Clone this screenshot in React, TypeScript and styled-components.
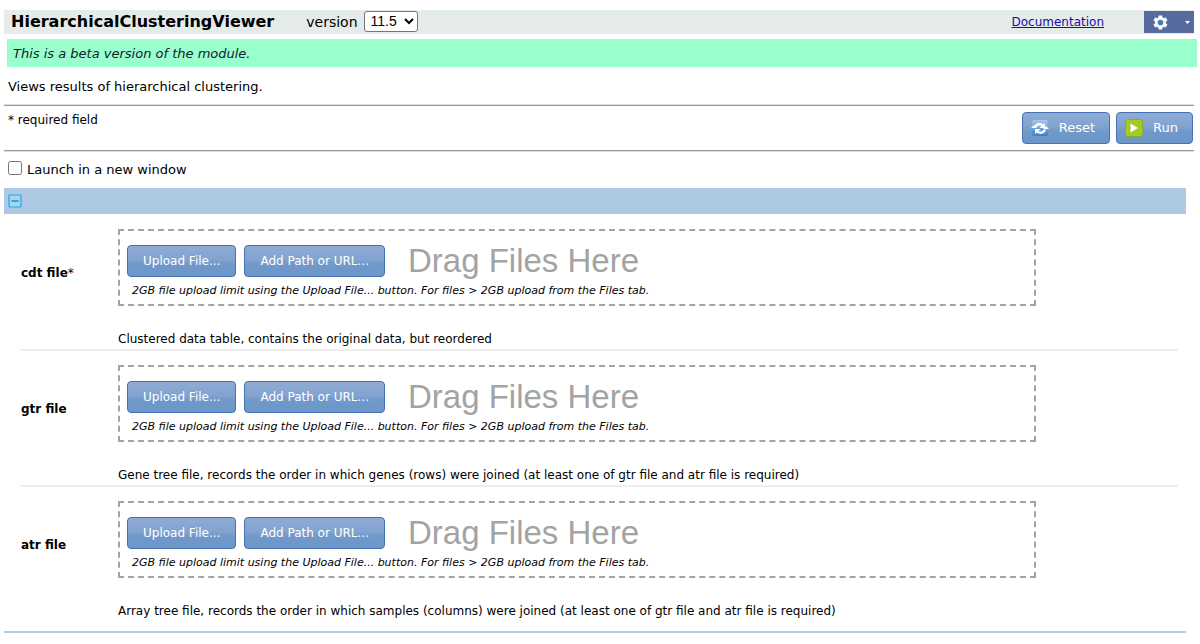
import React, { useState } from "react";
import styled, { createGlobalStyle } from "styled-components";

const GlobalStyle = createGlobalStyle`
  * { box-sizing: border-box; }
  body {
    margin: 0;
    background: #fff;
    color: #000;
    font-family: Verdana, "DejaVu Sans", sans-serif;
    font-size: 12px;
    line-height: 16px;
  }
`;

const Page = styled.form`
  padding: 10px 6px 12px 4px;
`;

const Header = styled.header`
  display: flex;
  align-items: center;
  height: 24px;
  padding-left: 7px;
  background: #e4ebe8;
`;

const Title = styled.h1`
  margin: 0 32px 0 0;
  font-size: 16px;
  line-height: 24px;
`;

const VersionLabel = styled.label`
  display: flex;
  align-items: center;
  gap: 6px;
  flex: 1;
  font-size: 14px;
  line-height: 24px;
`;

const VersionSelect = styled.select`
  width: 54px;
  height: 21px;
  margin-bottom: 2px;
  padding: 0 0 0 2px;
  border: 1px solid #767676;
  border-radius: 3px;
  background: #fff;
  color: #000;
  font: 14px Arial, "Liberation Sans", sans-serif;
`;

const DocLink = styled.a`
  margin-right: 40px;
  color: #1a0dab;
`;

const SettingsButton = styled.button`
  display: flex;
  align-items: center;
  justify-content: space-between;
  width: 50px;
  height: 22px;
  padding: 0 4px 0 8px;
  border: 0;
  background: #586b9e;
`;

const Banner = styled.p`
  margin: 5px -3px 0 3px;
  padding: 7px 6px 5px;
  background: #99ffcc;
  color: #123;
  font-size: 13px;
  font-style: italic;
`;

const Summary = styled.p`
  margin: 0;
  padding: 12px 4px 10px;
  font-size: 13px;
`;

const ActionBar = styled.div`
  display: flex;
  justify-content: space-between;
  align-items: flex-start;
  padding: 6px 1px 6px 4px;
  border: solid #999;
  border-width: 1px 0;
  box-shadow: 0 -1px #ddd, 0 1px #ddd;
`;

const Actions = styled.div`
  display: flex;
  gap: 6px;
`;

const BlueButton = styled.button`
  display: flex;
  align-items: center;
  gap: 10px;
  height: 32px;
  padding: 0 15px;
  border: 1px solid #4572b5;
  border-radius: 4px;
  background: linear-gradient(#8eabd3 0%, #82a3d0 45%, #7099ca 60%, #6d96c9 100%);
  color: #fff;
  font-family: Verdana, "DejaVu Sans", sans-serif;
  font-size: 12px;
  line-height: 16px;
  white-space: nowrap;
`;

const ActionButton = styled(BlueButton)`
  padding: 0 14px 0 8px;
  font-size: 13px;
`;

const LaunchOption = styled.label`
  display: flex;
  align-items: center;
  gap: 5px;
  padding: 9px 4px 8px;
  font-size: 13px;
  line-height: 20px;

  input {
    width: 14px;
    height: 14px;
    margin: 0 0 4px;
  }
`;

const Group = styled.section`
  margin-right: 8px;
  border-bottom: 2px solid #b3cce3;
`;

const GroupBar = styled.div`
  display: flex;
  align-items: center;
  height: 26px;
  padding-left: 4px;
  background: #aec9e4;
`;

const CollapseButton = styled.button`
  display: flex;
  padding: 0;
  border: 0;
  background: none;
`;

const Rows = styled.div`
  padding: 1px 8px 0 16px;
`;

const Row = styled.div`
  display: grid;
  grid-template-columns: 98px 1fr;
  padding: 14px 0 2px;
  border-bottom: 2px solid #eee;

  &:last-child {
    padding-bottom: 12px;
    border-bottom: 0;
  }
`;

const RowLabel = styled.div`
  padding: 36px 0 0 1px;
  font-weight: bold;

  span { font-weight: normal; }
`;

const DropZone = styled.div`
  height: 77px;
  margin-right: 142px;
  padding: 14px 7px 0;
  border: 2px dashed #a3a3a3;
`;

const DropControls = styled.div`
  display: flex;
  align-items: center;
  gap: 8px;
  height: 32px;
`;

const DropText = styled.span`
  margin-left: 15px;
  color: #a3a3a3;
  font: 33px/32px Arial, "Liberation Sans", sans-serif;
`;

const LimitNote = styled.p`
  margin: 6px 0 0 5px;
  font-size: 11px;
  font-style: italic;
`;

const Description = styled.p`
  margin: 25px 0 0;
`;

const GearIcon = () => (
  <svg width="17" height="17" viewBox="0 0 24 24" fill="#fff" aria-hidden="true">
    <path d="M19.4 13c.1-.3.1-.7.1-1s0-.7-.1-1l2.100-1.600c.2-.2.3-.5.1-.7l-2-3.500c-.1-.2-.4-.3-.6-.2l-2.500 1c-.5-.4-1.100-.7-1.700-1l-.4-2.600c0-.3-.3-.4-.5-.4h-4c-.2 0-.4.2-.5.4L9 5c-.6.300-1.200.6-1.700 1l-2.500-1c-.2-.1-.5 0-.6.200l-2 3.500c-.1.200-.1.500.1.700L4.500 11c0 .3-.1.700-.1 1s0 .7.100 1l-2.200 1.600c-.2.200-.2.500-.1.700l2 3.500c.1.200.4.300.6.200l2.500-1c.5.4 1.100.7 1.700 1l.4 2.600c0 .2.200.4.500.4h4c.2 0 .5-.2.5-.4l.4-2.600c.6-.3 1.200-.6 1.700-1l2.500 1c.2.100.5 0 .6-.2l2-3.500c.1-.2.1-.5-.1-.7z" />
    <circle cx="12" cy="12" r="4" fill="#3f7fba" />
  </svg>
);

const CaretIcon = () => (
  <svg width="5" height="3" viewBox="0 0 5 3" aria-hidden="true">
    <path d="M0 0h5L2.500 3z" fill="#fff" />
  </svg>
);

const ResetIcon = () => (
  <svg width="18" height="18" viewBox="0 0 18 18" aria-hidden="true">
    <defs>
      <linearGradient id="resetFill" x1="0" y1="0" x2="0" y2="1">
        <stop offset="0" stopColor="#a6c8ee" />
        <stop offset="1" stopColor="#3b7fc4" />
      </linearGradient>
    </defs>
    <rect x="1" y="1" width="16" height="16" rx="2" fill="url(#resetFill)" />
    <path d="M3 8.500C3.500 4.500 8.500 2.500 12 5.500L14 4v5H8.500l2-2C8.500 5.800 6 6.500 5.500 8.500z" fill="#fff" />
    <path d="M3 8.500C3.500 4.500 8.500 2.500 12 5.500L14 4v5H8.500l2-2C8.500 5.800 6 6.500 5.500 8.500z" fill="#fff" transform="rotate(180 9 9.500)" />
    <path d="M0 9l3-3 3 3zM12 10h6l-3-3z" fill="#fff" />
  </svg>
);

const RunIcon = () => (
  <svg width="18" height="18" viewBox="0 0 18 18" aria-hidden="true">
    <rect x="0.500" y="0.500" width="17" height="17" rx="2" fill="#a5c926" stroke="#86ac2c" />
    <path d="M5.500 4.500l7.500 4.500-7.500 4.500z" fill="#fff" />
  </svg>
);

const ToggleIcon = ({ open }: { open: boolean }) => (
  <svg width="14" height="14" viewBox="0 0 14 14" aria-hidden="true">
    <rect x="1" y="1" width="12" height="12" rx="1" fill="#a9d3ee" stroke="#20a9e2" strokeWidth="1.200" />
    <path d={open ? "M3.500 7h7" : "M3.500 7h7M7 3.500v7"} stroke="#1ba0d8" strokeWidth="1.700" />
  </svg>
);

const files = [
  { name: "cdt file", required: true, text: "Clustered data table, contains the original data, but reordered" },
  { name: "gtr file", required: false, text: "Gene tree file, records the order in which genes (rows) were joined (at least one of gtr file and atr file is required)" },
  { name: "atr file", required: false, text: "Array tree file, records the order in which samples (columns) were joined (at least one of gtr file and atr file is required)" },
];

export default function App() {
  const [open, setOpen] = useState(true);

  return (
    <>
      <GlobalStyle />
      <Page onSubmit={(e: React.FormEvent) => e.preventDefault()}>
        <Header>
          <Title>HierarchicalClusteringViewer</Title>
          <VersionLabel>
            version
            <VersionSelect defaultValue="11.5">
              <option>11.5</option>
            </VersionSelect>
          </VersionLabel>
          <DocLink href="#documentation">Documentation</DocLink>
          <SettingsButton type="button" aria-label="Settings">
            <GearIcon />
            <CaretIcon />
          </SettingsButton>
        </Header>
        <Banner>This is a beta version of the module.</Banner>
        <Summary>Views results of hierarchical clustering.</Summary>
        <ActionBar>
          <span>* required field</span>
          <Actions>
            <ActionButton type="reset"><ResetIcon />Reset</ActionButton>
            <ActionButton type="submit"><RunIcon />Run</ActionButton>
          </Actions>
        </ActionBar>
        <LaunchOption>
          <input type="checkbox" />
          Launch in a new window
        </LaunchOption>
        <Group>
          <GroupBar>
            <CollapseButton type="button" aria-label="Toggle parameters" aria-expanded={open} onClick={() => setOpen(!open)}>
              <ToggleIcon open={open} />
            </CollapseButton>
          </GroupBar>
          {open && (
            <Rows>
              {files.map((file) => (
                <Row key={file.name}>
                  <RowLabel>{file.name}{file.required && <span>*</span>}</RowLabel>
                  <div>
                    <DropZone>
                      <DropControls>
                        <BlueButton type="button">Upload File...</BlueButton>
                        <BlueButton type="button">Add Path or URL...</BlueButton>
                        <DropText>Drag Files Here</DropText>
                      </DropControls>
                      <LimitNote>2GB file upload limit using the Upload File... button. For files &gt; 2GB upload from the Files tab.</LimitNote>
                    </DropZone>
                    <Description>{file.text}</Description>
                  </div>
                </Row>
              ))}
            </Rows>
          )}
        </Group>
      </Page>
    </>
  );
}
